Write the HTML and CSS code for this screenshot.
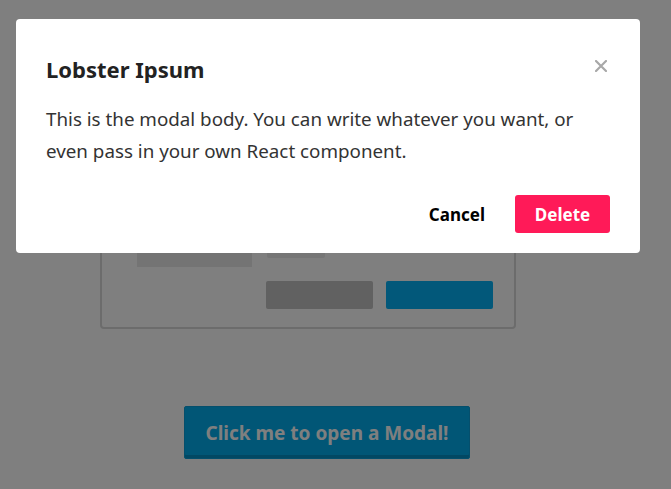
FILE: index.html
```html
<!DOCTYPE html>
<html lang="en">
<head>
    <meta charset="UTF-8">
    <title>Modal Demo</title>
    <link rel="stylesheet" href="styles.css">
</head>
<body>
    <div class="page">
        <div class="card">
            <div class="field">
                <div class="label-bar"></div>
                <div class="input-bar"></div>
            </div>
            <div class="field">
                <div class="label-bar"></div>
                <div class="input-bar"></div>
            </div>
            <div class="field">
                <div class="label-bar"></div>
                <div class="input-bar"></div>
            </div>
            <div class="field last">
                <div class="label-bar"></div>
                <div class="input-bar short"></div>
            </div>
            <div class="card-actions">
                <div class="ghost-btn grey"></div>
                <div class="ghost-btn blue"></div>
            </div>
        </div>

        <button class="open-btn">Click me to open a Modal!</button>
    </div>

    <div class="overlay">
        <div class="modal">
            <div class="modal-head">
                <h2>Lobster Ipsum</h2>
                <button class="close" aria-label="Close">
                    <svg width="12" height="12" viewBox="0 0 12 12">
                        <path d="M1 1 L11 11 M11 1 L1 11" stroke="#a8a8a8" stroke-width="2.2" stroke-linecap="round"/>
                    </svg>
                </button>
            </div>
            <p class="modal-body">This is the modal body. You can write whatever you want, or even pass in your own React component.</p>
            <div class="modal-foot">
                <button class="btn-cancel">Cancel</button>
                <button class="btn-delete">Delete</button>
            </div>
        </div>
    </div>
</body>
</html>
```

FILE: styles.css
```css
html, body {
    margin: 0;
    padding: 0;
    background: #fff;
    font-family: "Noto Sans", "Open Sans", sans-serif;
}

.page {
    padding-top: 79px;
}

.card {
    width: 416px;
    margin-left: 100px;
    border: 2px solid #d8d8d8;
    border-radius: 4px;
    padding: 30px 21px 18px 35px;
    box-sizing: border-box;
}

.field {
    display: flex;
    align-items: flex-start;
    gap: 15px;
    margin-bottom: 20px;
}

.field.last {
    margin-bottom: 14px;
}

.label-bar {
    width: 115px;
    height: 24px;
    background: #e8e8e8;
}

.input-bar {
    width: 226px;
    height: 24px;
    background: #ececec;
    border-radius: 2px;
}

.input-bar.short {
    width: 58px;
    height: 15px;
}

.card-actions {
    display: flex;
    justify-content: flex-end;
    gap: 13px;
}

.ghost-btn {
    width: 107px;
    height: 28px;
    border-radius: 2px;
}

.ghost-btn.grey {
    background: #c2c2c2;
}

.ghost-btn.blue {
    background: #04b0f4;
}

.open-btn {
    display: block;
    margin: 77px 0 0 184px;
    width: 286px;
    height: 53px;
    border: 1px solid #0a9ed8;
    border-radius: 2px;
    background: #02aded;
    box-shadow: inset 0 -3px 0 #0591c6;
    color: #fff;
    font-family: "Noto Sans", sans-serif;
    font-size: 19px;
    font-weight: bold;
}

.overlay {
    position: fixed;
    inset: 0;
    background: rgba(0, 0, 0, 0.5);
    padding: 19px 31px 0 16px;
}

.modal {
    width: 624px;
    height: 234px;
    box-sizing: border-box;
    background: #fff;
    border-radius: 4px;
    padding: 33px 30px 20px 30px;
    display: flex;
    flex-direction: column;
}

.modal-head {
    display: flex;
    justify-content: space-between;
    align-items: center;
}

.modal-head h2 {
    margin: 0;
    font-size: 22px;
    line-height: 34px;
    font-weight: bold;
    color: #222;
}

.close {
    border: 0;
    background: none;
    padding: 0 3px 0 0;
    display: flex;
    margin-top: -6px;
}

.modal-body {
    margin: 17px 0 0 0;
    font-size: 18.8px;
    line-height: 32px;
    color: #333;
}

.modal-foot {
    display: flex;
    justify-content: flex-end;
    align-items: center;
    gap: 30px;
    margin-top: auto;
}

.btn-cancel {
    border: 0;
    background: none;
    font-family: "Noto Sans", sans-serif;
    font-size: 17px;
    font-weight: bold;
    color: #000;
    padding: 0;
}

.btn-delete {
    width: 95px;
    height: 38px;
    border: 0;
    border-radius: 3px;
    background: #ff1a58;
    color: #fff;
    font-family: "Noto Sans", sans-serif;
    font-size: 17px;
    font-weight: bold;
}
```
